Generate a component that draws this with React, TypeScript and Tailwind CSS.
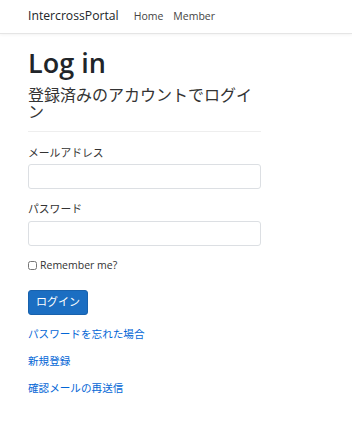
import React from 'react';

const font = { fontFamily: '"Open Sans", "Noto Sans CJK JP", sans-serif' };

export default function App() {
  return (
    <div className="min-h-screen bg-white text-[#212529]" style={font}>
      <header className="h-[34px] border-b border-[#e5e5e5] shadow-[0_1px_3px_rgba(0,0,0,0.05)] flex items-center px-[28px]">
        <span className="text-[12.2px] text-[#212529] mr-[15px]">IntercrossPortal</span>
        <nav className="flex gap-[10px] text-[10.5px] text-[#444]">
          <a>Home</a>
          <a>Member</a>
        </nav>
      </header>
      <main className="px-[28px] pt-[12px]">
        <div className="w-[233px]">
          <h1 className="text-[27px] font-semibold leading-[34px]">Log in</h1>
          <h2 className="text-[16px] leading-[17px] text-[#333] mt-[7px]">登録済みのアカウントでログイン</h2>
          <hr className="mt-[10px] mb-[13px] border-t border-[#eee]" />
          <label className="block text-[10.8px] text-[#333] leading-[16px] mb-[3px]">メールアドレス</label>
          <input className="block w-full h-[25px] border border-[#dcdfe3] rounded-[3px]" />
          <label className="block text-[10.8px] text-[#333] leading-[16px] mt-[12px] mb-[4px]">パスワード</label>
          <input type="password" className="block w-full h-[25px] border border-[#dcdfe3] rounded-[3px]" />
          <label className="flex items-center gap-[3px] text-[10.5px] text-[#333] mt-[12px]">
            <input type="checkbox" className="w-[9px] h-[9px] m-0" />
            Remember me?
          </label>
          <button className="mt-[16px] w-[60px] h-[25px] bg-[#1b6ec2] text-white text-[11px] rounded-[3px] border border-[#1861ac]">ログイン</button>
          <div className="mt-[11px] flex flex-col gap-[11px] text-[10.6px] text-[#0366d6] leading-[16px]">
            <a>パスワードを忘れた場合</a>
            <a>新規登録</a>
            <a>確認メールの再送信</a>
          </div>
        </div>
      </main>
    </div>
  );
}
